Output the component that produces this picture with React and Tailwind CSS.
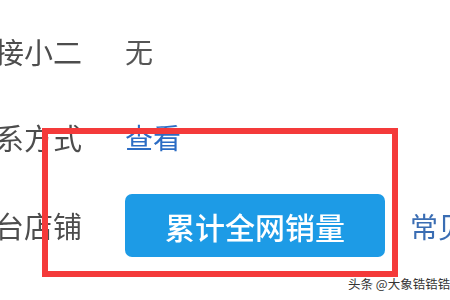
import React from 'react';

const cjk = { fontFamily: '"Noto Sans CJK SC", "Noto Sans", sans-serif' };

const Row = ({ label, children, height }) => (
  <div className={`flex items-center ${height}`}>
    <div className="shrink-0 w-[116px] -ml-[34px] text-right text-[29px] leading-none text-[#4d4d4d] whitespace-nowrap">
      {label}
    </div>
    <div className="shrink-0 ml-[43px] flex items-center">{children}</div>
  </div>
);

export default function App() {
  return (
    <div className="relative w-[450px] h-[300px] overflow-hidden bg-white" style={cjk}>
      <div className="flex flex-col gap-[28px] pt-[22px] blur-[0.5px]">
        <Row label="对接小二" height="h-[58px]">
          <span className="text-[28px] leading-none text-[#555]">无</span>
        </Row>
        <Row label="联系方式" height="h-[58px]">
          <span className="text-[28px] leading-none text-[#2b6cc4]">查看</span>
        </Row>
        <Row label="平台店铺" height="h-[63px]">
          <button className="shrink-0 w-[260px] h-[63px] rounded-[7px] bg-[#1d9be6] text-white text-[30px] font-medium leading-none">
            累计全网销量
          </button>
          <span className="ml-[25px] text-[28px] leading-none text-[#3a6db3] whitespace-nowrap">常见问题</span>
        </Row>
      </div>

      {/* annotation box */}
      <div className="absolute left-[42px] top-[128px] w-[356px] h-[149px] border-[6px] border-[#f43a3a]" />

      {/* watermark */}
      <div className="absolute left-[348px] top-[278px] text-[12.5px] leading-none text-[#333] whitespace-nowrap [text-shadow:0_0_2px_#fff]">
        头条 @大象锆锆锆
      </div>
    </div>
  );
}
